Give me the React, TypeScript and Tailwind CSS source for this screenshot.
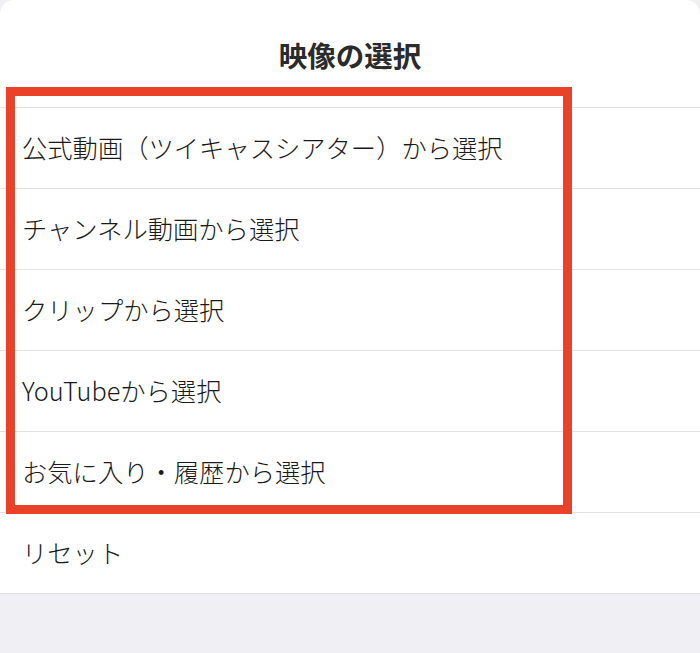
export default function App() {
  const items = [
    '公式動画（ツイキャスシアター）から選択',
    'チャンネル動画から選択',
    'クリップから選択',
    'YouTubeから選択',
    'お気に入り・履歴から選択',
  ]

  return (
    <div
      className="relative w-[700px] h-[653px] overflow-hidden bg-[#efeff4]"
      style={{ fontFamily: '"Noto Sans CJK JP", "Noto Sans", sans-serif' }}
    >
      <div className="bg-white rounded-t-[14px]">
        <div className="h-[107px] flex items-center justify-center">
          <h1 className="text-[28.5px] font-bold text-[#2b2b2b] pt-[3px]">映像の選択</h1>
        </div>
        <ul className="border-t border-[#e2e2e4]">
          {items.map((item) => (
            <li key={item} className="h-[81px] flex items-center pl-[22px] border-b border-[#e2e2e4] text-[25.3px] font-light text-[#1a1a1a]">
              {item}
            </li>
          ))}
          <li className="h-[81px] flex items-center pl-[22px] border-b border-[#dcdcde] text-[25.3px] font-light text-[#1a1a1a]">
            リセット
          </li>
        </ul>
      </div>

      {/* annotation box */}
      <div className="absolute left-[6px] top-[87px] w-[566px] h-[427px] border-[9px] border-[#ea4129]" />
    </div>
  )
}
